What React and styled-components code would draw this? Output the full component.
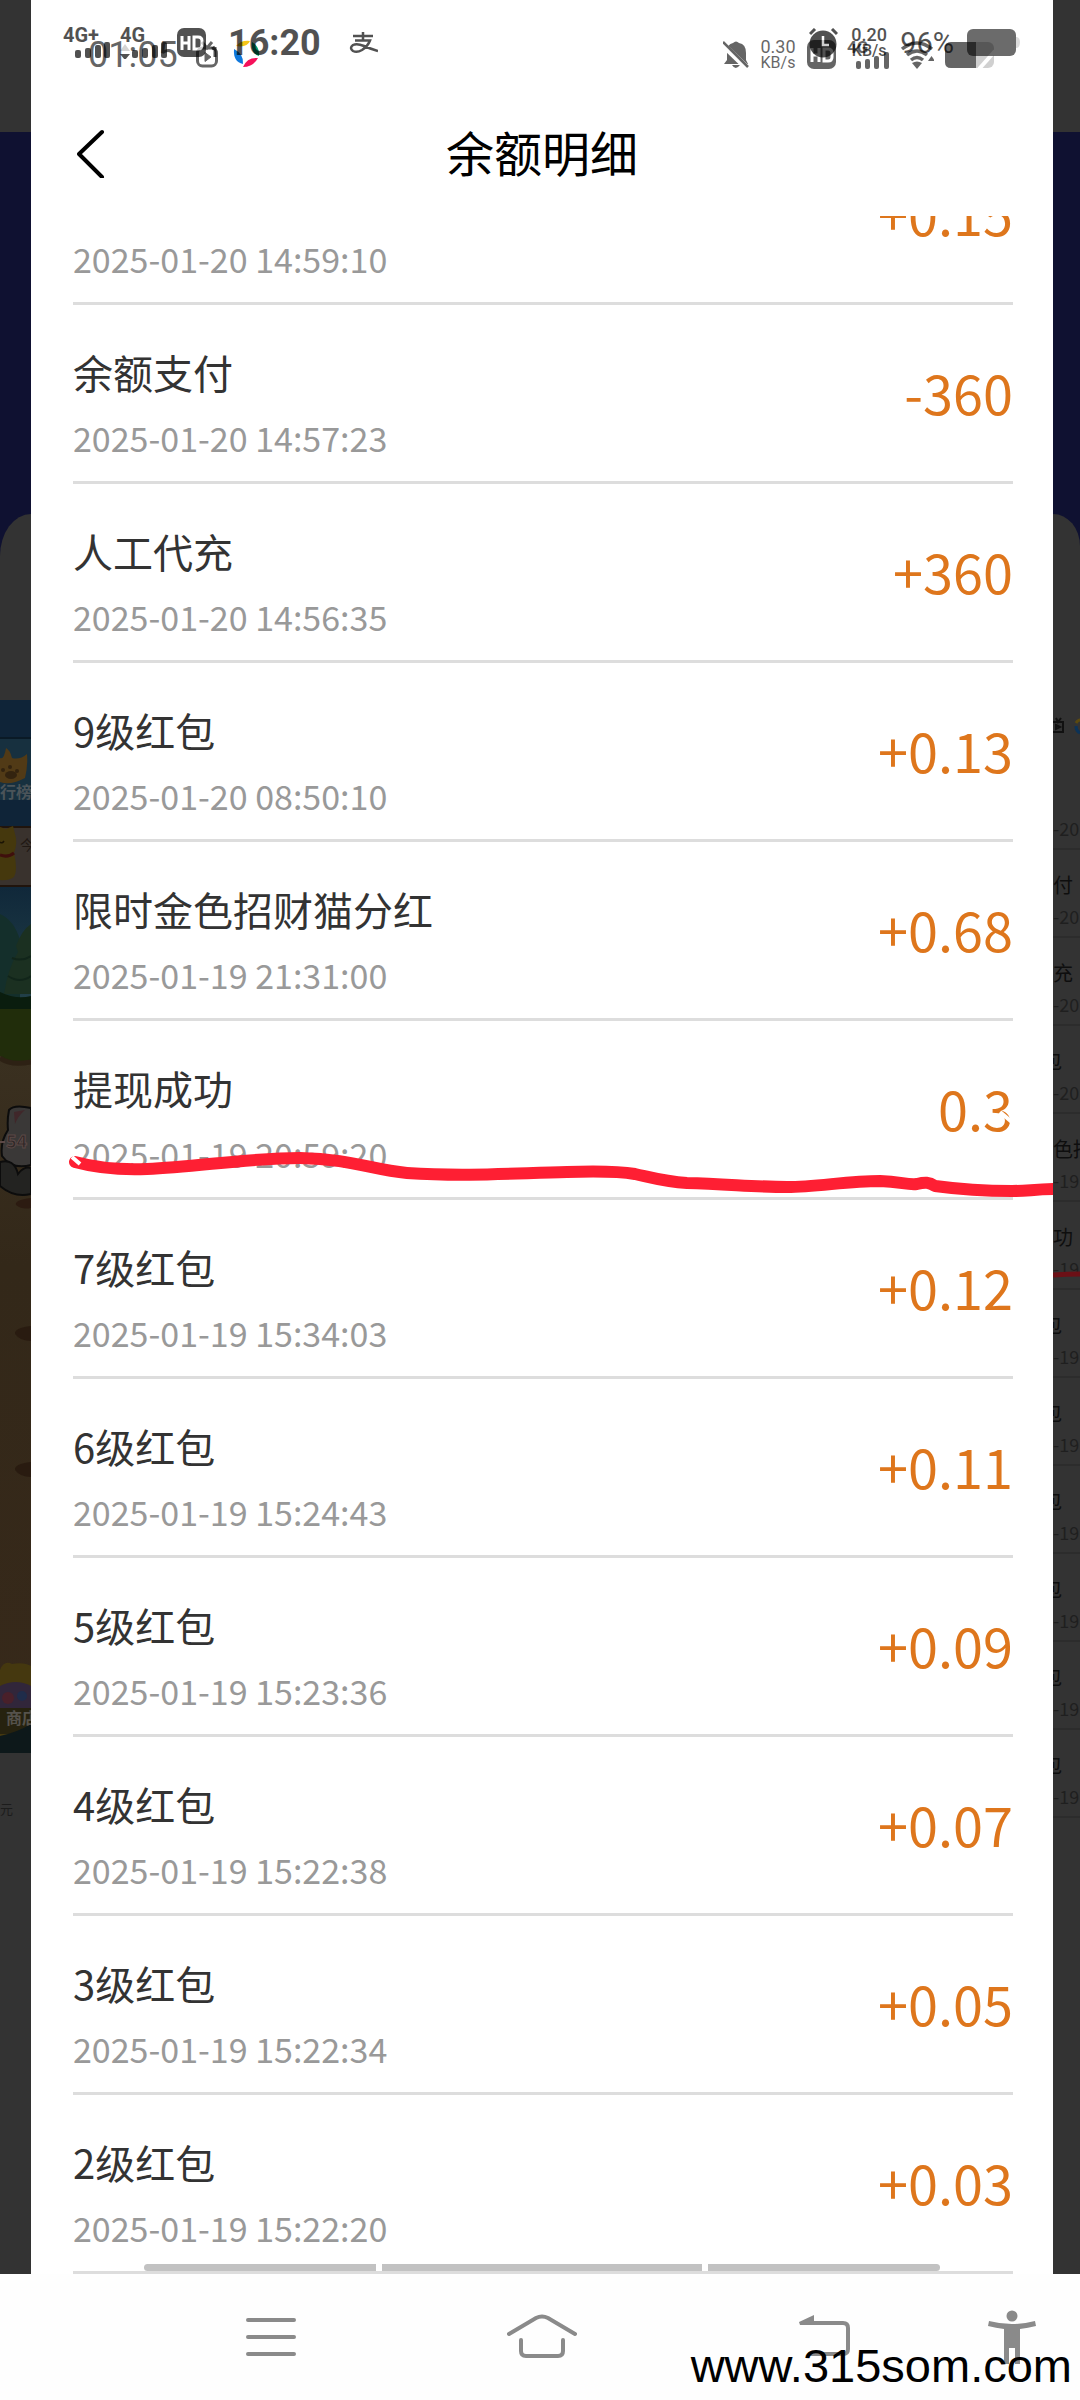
import styled, { createGlobalStyle } from 'styled-components';

const GlobalStyle = createGlobalStyle`
    * {
        box-sizing: border-box;
    }
    body {
        margin: 0;
        background-color: #ffffff;
        font-family: "Noto Sans CJK SC", "Noto Sans", sans-serif;
    }
`;

const Screen = styled.div`
    position: relative;
    width: 100%;
`;
const Backdrop = styled.div`
    display: grid;
    grid-template-columns: 31px minmax(0, 1fr) 27px;
    background-color: #333333;
`;
const Strip = styled.div`
    display: flex;
    flex-direction: column;
    overflow: hidden;
`;
const StripTop = styled.div`
    height: 132px;
`;
const StripBanner = styled.div`
    height: 568px;
    padding-top: 382px;
    background-color: #0f1131;
`;
const StripCard = styled.div`
    height: 186px;
    background-color: #333333;
    border-radius: ${props=>props.side === "left" ? "31px 0 0 0 / 42px 0 0 0" : "0 27px 0 0 / 0 32px 0 0"};
`;
const StripNote = styled.span`
    margin-top: 46px;
    font-size: 13px;
    line-height: 20px;
    color: #1c1c1c;
    white-space: nowrap;
`;
const MiniHead = styled.div`
    height: 62px;
    padding-top: 16px;
    white-space: nowrap;
`;
const MiniRow = styled.div`
    height: 88px;
    padding-top: 20px;
    border-bottom: 2px solid #2c2c2c;
    position: relative;
    white-space: nowrap;
`;
const MiniTitle = styled.div`
    height: 32px;
    font-size: 20px;
    line-height: 30px;
    color: #0e0e0e;
    display: flex;
    margin-left: ${props=>props.$cut ? "-11px" : "0"};
`;
const MiniDate = styled.div`
    font-size: 18px;
    line-height: 28px;
    color: #1f1f1f;
`;
const MiniMark = styled.svg`
    position: absolute;
    left: 0;
    bottom: 6px;
`;

const Sheet = styled.main`
    position: relative;
    min-width: 0;
    background-color: #ffffff;
    overflow: hidden;
`;
const StatusArea = styled.div`
    position: relative;
    height: 88px;
`;
const StatusBar = styled.div`
    position: absolute;
    top: 0;
    left: 0;
    right: 0;
    display: flex;
    align-items: center;
    font-family: Roboto, sans-serif;
    height: ${props=>props.$under ? "109px" : "86px"};
    padding: ${props=>props.$under ? "0 58px 0 57px" : "0 33px 0 32px"};
    opacity: ${props=>props.$under ? "0.6" : "0.68"};
`;
const StatusGroup = styled.div`
    display: flex;
    align-items: center;
    gap: ${props=>props.gap};
    margin-left: ${props=>props.$end ? "auto" : "0"};
`;
const Clock = styled.span`
    font-size: 36px;
    line-height: 40px;
    font-weight: ${props=>props.$under ? "400" : "700"};
    margin: ${props=>props.$under ? "0" : "0 19px 0 2px"};
`;
const Percent = styled.span`
    font-size: 29px;
    line-height: 32px;
    font-weight: 400;
    align-self: flex-start;
`;
const Speed = styled.div`
    width: 36px;
    display: flex;
    flex-direction: column;
    align-items: center;
    font-size: 18px;
    line-height: 16px;
    font-weight: ${props=>props.$bold ? "500" : "400"};
    white-space: nowrap;

    small {
        font-size: 16px;
    }
`;

const Header = styled.header`
    height: 128px;
    display: grid;
    grid-template-columns: 1fr auto 1fr;
    align-items: center;
    padding-bottom: 2px;
`;
const BackButton = styled.button`
    justify-self: start;
    display: flex;
    margin-left: 46px;
    padding: 0;
    border: none;
    background: none;
    cursor: pointer;
`;
const Title = styled.h1`
    margin: 0;
    font-size: 48px;
    line-height: 64px;
    font-weight: 400;
    color: #000000;
`;

const Viewport = styled.div`
    overflow: hidden;
`;
const List = styled.ul`
    list-style: none;
    margin: -90px 0 0;
    padding: 0 40px 0 42px;
`;
const Row = styled.li`
    position: relative;
    display: flex;
    align-items: center;
    justify-content: space-between;
    height: 179px;
    border-bottom: 3px solid #dddddd;
`;
const Info = styled.div`
    display: flex;
    flex-direction: column;
    gap: 12px;
    padding: 38px 0 18px;
`;
const Name = styled.span`
    height: 58px;
    font-size: 40px;
    line-height: 58px;
    color: #333333;
`;
const Time = styled.time`
    font-size: 34px;
    line-height: 50px;
    color: #999999;
`;
const Amount = styled.span`
    padding-bottom: 2px;
    font-size: 54px;
    line-height: 80px;
    color: #de761c;
`;
const Stroke = styled.svg`
    position: absolute;
    left: -6px;
    top: 84px;
    width: calc(100% + 46px);
    height: 100px;
    z-index: 1;
`;

const ScrollMarks = styled.div`
    position: absolute;
    left: 0;
    right: 0;
    bottom: 3px;
    display: flex;
    gap: 6px;
    padding: 0 113px;
`;
const ScrollMark = styled.span`
    flex: ${props=>props.grow};
    height: 7px;
    background-color: #c2c2c2;
    border-radius: ${props=>props.radius || "0"};
`;

const NavBar = styled.nav`
    display: grid;
    grid-template-columns: 271fr 271fr 296fr 77fr;
    height: 126px;
    padding: 0 30px 0 135px;
    background-color: #fefefe;
`;
const NavButton = styled.button`
    display: flex;
    justify-content: center;
    padding: 34px 0 0;
    border: none;
    background: none;
    cursor: pointer;
`;
const SiteMark = styled.span`
    position: absolute;
    right: 8px;
    bottom: 11px;
    font-family: "Liberation Sans", Arial, sans-serif;
    font-size: 47px;
    line-height: 46px;
    color: #000000;
`;

const records = [
    { time: "2025-01-20 14:59:10", amount: "+0.15" },
    { name: "余额支付", time: "2025-01-20 14:57:23", amount: "-360" },
    { name: "人工代充", time: "2025-01-20 14:56:35", amount: "+360" },
    { name: "9级红包", time: "2025-01-20 08:50:10", amount: "+0.13" },
    { name: "限时金色招财猫分红", time: "2025-01-19 21:31:00", amount: "+0.68" },
    { name: "提现成功", time: "2025-01-19 20:59:20", amount: "0.3", marked: true },
    { name: "7级红包", time: "2025-01-19 15:34:03", amount: "+0.12" },
    { name: "6级红包", time: "2025-01-19 15:24:43", amount: "+0.11" },
    { name: "5级红包", time: "2025-01-19 15:23:36", amount: "+0.09" },
    { name: "4级红包", time: "2025-01-19 15:22:38", amount: "+0.07" },
    { name: "3级红包", time: "2025-01-19 15:22:34", amount: "+0.05" },
    { name: "2级红包", time: "2025-01-19 15:22:20", amount: "+0.03" },
];

const miniRows = [
    { name: "付", date: "-20" },
    { name: "充", date: "-20" },
    { name: "包", date: "-20", cut: true },
    { name: "色招", date: "-19" },
    { name: "功", date: "-19", marked: true },
    { name: "包", date: "-19", cut: true },
    { name: "包", date: "-19", cut: true },
    { name: "包", date: "-19", cut: true },
    { name: "包", date: "-19", cut: true },
    { name: "包", date: "-19", cut: true },
    { name: "包", date: "-19", cut: true },
];

const SignalA = ({ label, arrows }) => (
    <svg width="48" height="32" viewBox="0 0 48 32">
        <text x="0" y="15" fontSize="20" fontWeight="700">{label}</text>
        {arrows && <path d="M0 24L5 17L10 24Z" opacity="0.25"/>}
        {arrows && <path d="M0 27H10L5 33Z"/>}
        <rect x="12" y="23" width="6" height="8" rx="2"/>
        <rect x="22" y="21" width="6" height="10" rx="2"/>
        <rect x="32" y="18" width="6" height="13" rx="2"/>
        <rect x="41" y="15" width="6" height="16" rx="2"/>
    </svg>
);

const SignalB = () => (
    <svg width="42" height="29" viewBox="0 0 42 29">
        <text x="0" y="13" fontSize="17" fontWeight="700">4G</text>
        <rect x="9" y="21" width="5" height="8" rx="2"/>
        <rect x="18" y="19" width="5" height="10" rx="2"/>
        <rect x="27" y="16" width="5" height="13" rx="2"/>
        <rect x="37" y="12" width="5" height="17" rx="2"/>
    </svg>
);

const HdIcon = ({ width, children }) => (
    <svg width={width} height="30" viewBox={`0 0 ${width} 30`}>
        <rect width="29" height="29" rx="7"/>
        <g fill="none" stroke="#ffffff" strokeWidth="3">
            <path d="M5 8V22M12 8V22M5 15H12"/>
            <path d="M17 9H21Q25 9 25 13V17Q25 21 21 21H17Z"/>
        </g>
        {children}
    </svg>
);

const StatusUnder = () => (
    <StatusBar $under>
        <StatusGroup gap="18px">
            <Clock $under>01:05</Clock>
            <svg width="22" height="30" viewBox="0 0 22 30" fill="none" stroke="#000000" strokeWidth="3">
                <rect x="1.5" y="8" width="19" height="18" rx="5"/>
                <path d="M6 2L11 8L16 2"/>
                <path d="M9 12.500L15 17L9 21.500Z" fill="#000000" strokeWidth="1"/>
            </svg>
        </StatusGroup>
        <StatusGroup gap="11px" $end>
            <svg width="26" height="28" viewBox="0 0 26 28">
                <path d="M4 11Q4 3 10 2Q13 -1 16 2Q23 3 23 12V19L25 23H1L4 19Z"/>
                <path d="M9 24Q12.500 30 17 24Z"/>
                <path d="M-1 3L24 27" stroke="#ffffff" strokeWidth="6"/>
                <path d="M0 1L25 26" stroke="#000000" strokeWidth="2.500"/>
            </svg>
            <Speed><span>0.30</span><small>KB/s</small></Speed>
            <HdIcon width="29"/>
            <SignalB/>
            <svg width="34" height="28" viewBox="0 0 34 28">
                <g fill="none" stroke="#000000" strokeWidth="3.500">
                    <path d="M2 8Q17 -4 32 8"/>
                    <path d="M7 14Q17 6 27 14"/>
                    <path d="M11 19Q17 14 23 19"/>
                </g>
                <path d="M12 22Q17 19 22 22L17 28Z"/>
                <path d="M28 20L31.500 15L35 20Z"/>
            </svg>
            <svg width="50" height="26" viewBox="0 0 50 26">
                <rect width="49" height="26" rx="6" opacity="0.3"/>
                <path d="M6 0H31V26H6Q0 26 0 20V6Q0 0 6 0Z"/>
                <path d="M34 27L50 9" stroke="#ffffff" strokeWidth="4"/>
            </svg>
        </StatusGroup>
    </StatusBar>
);

const Pinwheel = styled.svg`
    position: absolute;
    left: 202px;
    top: 40px;
`;

const StatusOver = () => (
    <StatusBar>
        <StatusGroup gap="9px">
            <SignalA label="4G+"/>
            <SignalA label="4G" arrows/>
            <HdIcon width="40"><path d="M38 19V29M35 21L38 19" stroke="#000000" strokeWidth="3"/></HdIcon>
            <Clock>16:20</Clock>
            <svg width="29" height="22" viewBox="0 0 29 22" fill="none" stroke="#000000" strokeWidth="2.500">
                <path d="M4 4H24M14 0V8M6 8.500H21Q19 14 13 18Q8 21 4 19Q0 16 4 13Q8 11 15 14Q22 17 29 19"/>
            </svg>
        </StatusGroup>
        <StatusGroup gap="13px" $end>
            <svg width="29" height="30" viewBox="0 0 29 30">
                <circle cx="14" cy="16" r="13.500"/>
                <path d="M1 6L6 1M28 6L23 1" stroke="#000000" strokeWidth="3"/>
                <path d="M14 8V17H20" stroke="#ffffff" strokeWidth="2.500" fill="none"/>
            </svg>
            <Speed $bold><span>0.20</span><small>KB/s</small></Speed>
            <Percent>96%</Percent>
            <svg width="53" height="28" viewBox="0 0 53 28">
                <rect width="49" height="27" rx="6" opacity="0.85"/>
                <path d="M49 8H50Q53 9 53 13Q53 18 50 19H49Z" opacity="0.2"/>
            </svg>
        </StatusGroup>
    </StatusBar>
);

// dimmed game scene that shows past the left edge of the sheet
const Scene = () => (
    <svg width="31" height="1053" viewBox="0 0 31 1053">
        <defs>
            <linearGradient id="sky" x1="0" y1="0" x2="0" y2="1">
                <stop offset="0" stopColor="#10283a"/>
                <stop offset="1" stopColor="#24424a"/>
            </linearGradient>
            <linearGradient id="ground" x1="0" y1="0" x2="0" y2="1">
                <stop offset="0" stopColor="#3a3020"/>
                <stop offset="0.3" stopColor="#332819"/>
                <stop offset="1" stopColor="#37291a"/>
            </linearGradient>
        </defs>
        <rect width="31" height="1053" fill="#0f2438"/>
        <rect y="38" width="31" height="62" fill="#17303f"/>
        <path d="M0 38H31" stroke="#0a1a26" strokeWidth="2"/>
        <path d="M0 58Q4 60 6 48Q10 50 12 58Q20 60 27 54Q28 66 25 78Q10 86 0 82Z" fill="#513a16"/>
        <ellipse cx="11" cy="75" rx="6" ry="4" fill="#33230f"/>
        <circle cx="3" cy="70" r="2" fill="#33230f"/>
        <circle cx="10" cy="67" r="2" fill="#33230f"/>
        <circle cx="17" cy="71" r="2" fill="#33230f"/>
        <text x="0" y="98" fontSize="16" fontWeight="700" fill="#4b5459">行榜</text>
        <rect y="127" width="31" height="58" fill="#39322d"/>
        <path d="M0 127H31M0 186H31" stroke="#20140c" strokeWidth="2"/>
        <text x="20" y="150" fontSize="14" fill="#201813">今</text>
        <path d="M0 127L6 129L13 126L15 134Q18 142 14 153Q18 170 14 177Q8 181 0 180Z" fill="#45380d"/>
        <path d="M0 155Q8 158 14 153" stroke="#3f0f0c" strokeWidth="3" fill="none"/>
        <path d="M0 142Q2 144 4 141" stroke="#1b1404" strokeWidth="1.500" fill="none"/>
        <rect y="187" width="31" height="124" fill="url(#sky)"/>
        <path d="M0 214Q14 220 20 240V311H0Z" fill="#142f2b"/>
        <path d="M31 224Q22 230 16 246L18 252Q8 268 4 294H31Z" fill="#1b3021"/>
        <path d="M31 256Q22 262 12 258M31 276Q20 284 8 276" stroke="#11251a" strokeWidth="2" fill="none"/>
        <path d="M0 292Q16 300 31 296V311H0Z" fill="#0a1d0e"/>
        <rect y="309" width="31" height="56" fill="#212d0b"/>
        <path d="M0 356Q10 364 31 360V1053H0Z" fill="url(#ground)"/>
        <path d="M0 358Q10 366 31 362" stroke="#2d2114" strokeWidth="5" fill="none"/>
        <g stroke="#0c0c0c" strokeWidth="2">
            <path d="M31 408Q14 404 9 410Q7 420 8 430Q0 442 2 456Q12 470 31 465Z" fill="#3a3837"/>
            <path d="M0 462Q14 458 18 474Q24 466 31 468V494Q14 498 0 486Z" fill="#232321"/>
        </g>
        <path d="M14 412L25 410Q18 416 15 424Z" fill="#40272a"/>
        <text x="6" y="448" fontSize="18" fontWeight="700" fill="#2f2726" stroke="#5b4846" strokeWidth="1">54</text>
        <path d="M0 442H5" stroke="#5b4846" strokeWidth="2"/>
        <path d="M31 498Q14 500 16 505Q22 510 31 508Z" fill="#2c1b11"/>
        <path d="M31 626Q14 628 15 634Q20 641 31 641Z" fill="#291b10"/>
        <path d="M31 762Q14 764 15 770Q20 777 31 777Z" fill="#291b10"/>
        <path d="M0 970Q4 960 12 964Q24 962 31 966V1053H0Z" fill="#45380f"/>
        <path d="M0 986Q16 978 31 986V1012H0Z" fill="#31263a"/>
        <circle cx="8" cy="998" r="6" fill="#49202a"/>
        <circle cx="22" cy="996" r="5" fill="#1f2c4a"/>
        <rect y="1008" width="31" height="26" fill="#26220f"/>
        <path d="M0 1036Q18 1032 31 1024V1053H0Z" fill="#0d181a"/>
        <text x="6" y="1024" fontSize="16" fontWeight="700" fill="#55524c">商店</text>
    </svg>
);

const App = () => {
  return (
    <Screen>
        <GlobalStyle/>
        <Backdrop>
            <Strip>
                <StripTop/>
                <StripBanner><StripCard side="left"/></StripBanner>
                <Scene/>
                <StripNote>元</StripNote>
            </Strip>
            <Sheet>
                <StatusArea>
                    <Pinwheel width="27" height="27" viewBox="0 0 27 27">
                        <path d="M3 6Q8 0 17 1Q14 8 3 6Z" fill="#f5c518"/>
                        <path d="M19 2Q27 7 26 16Q18 14 19 2Z" fill="#00a06e"/>
                        <path d="M25 18Q20 27 10 27Q14 17 25 18Z" fill="#f5115a"/>
                        <path d="M1 9Q11 14 10 24Q0 22 1 9Z" fill="#0f78dc"/>
                    </Pinwheel>
                    <StatusUnder/>
                    <StatusOver/>
                </StatusArea>
                <Header>
                    <BackButton aria-label="返回">
                        <svg width="28" height="54" viewBox="0 0 28 54" fill="none" stroke="#000000" strokeWidth="4" strokeLinecap="round" strokeLinejoin="round">
                            <path d="M25 8L2 30L25 53"/>
                        </svg>
                    </BackButton>
                    <Title>余额明细</Title>
                </Header>
                <Viewport>
                    <List>
                        {records.map(item => (
                            <Row key={item.time}>
                                <Info>
                                    <Name>{item.name}</Name>
                                    <Time>{item.time}</Time>
                                </Info>
                                <Amount>{item.amount}</Amount>
                                {item.marked &&
                                    <Stroke viewBox="0 0 986 100" preserveAspectRatio="none" fill="none">
                                        <path d="M8 57C30 63 55 65 80 64C130 62 180 53 233 53C285 54 305 65 340 68C400 72 450 68 500 67C530 66 550 66 568 69C590 74 600 77 620 78C660 79 690 82 720 82C750 82 780 76 813 76C835 77 840 80 850 79C858 77 862 77 868 81C890 84 915 86 945 86C960 86 970 84 992 84" stroke="#fe1f33" strokeWidth="12" strokeLinecap="round" strokeLinejoin="round"/>
                                        <path d="M5 52L13 59" stroke="#ffffff" strokeWidth="4"/>
                                        <path d="M933 7L946 18" stroke="#ffffff" strokeWidth="4"/>
                                    </Stroke>
                                }
                            </Row>
                        ))}
                    </List>
                </Viewport>
                <ScrollMarks>
                    <ScrollMark grow={232} radius="4px 0 0 4px"/>
                    <ScrollMark grow={320}/>
                    <ScrollMark grow={232} radius="0 4px 4px 0"/>
                </ScrollMarks>
            </Sheet>
            <Strip>
                <StripTop/>
                <StripBanner><StripCard side="right"/></StripBanner>
                <MiniHead>
                    <svg width="27" height="24" viewBox="0 0 27 24" fill="none" stroke="#111111" strokeWidth="2">
                        <path d="M0 6H10V16H0M3 2L5 6L8 2M3 9L7 11L3 13Z"/>
                        <path d="M23 7Q25 4 27 4" stroke="#5c4a10" strokeWidth="3"/>
                        <path d="M23 10Q23 15 27 17" stroke="#0c3358" strokeWidth="3"/>
                    </svg>
                </MiniHead>
                <MiniRow>
                    <MiniTitle/>
                    <MiniDate>-20</MiniDate>
                </MiniRow>
                {miniRows.map((item, i) => (
                    <MiniRow key={i}>
                        <MiniTitle $cut={item.cut}>{item.name}</MiniTitle>
                        <MiniDate>{item.date}</MiniDate>
                        {item.marked &&
                            <MiniMark width="27" height="12" viewBox="0 0 27 12" fill="none">
                                <path d="M0 5Q14 4 27 4" stroke="#6b1016" strokeWidth="5"/>
                            </MiniMark>
                        }
                    </MiniRow>
                ))}
            </Strip>
        </Backdrop>
        <NavBar>
            <NavButton aria-label="菜单">
                <svg width="50" height="56" viewBox="0 0 50 56" stroke="#8a8a8a" strokeWidth="4" strokeLinecap="round">
                    <path d="M2 12H48M2 29H48M2 46H48"/>
                </svg>
            </NavButton>
            <NavButton aria-label="主页">
                <svg width="70" height="56" viewBox="0 0 70 56" fill="none" stroke="#8a8a8a" strokeWidth="4" strokeLinecap="round">
                    <path d="M2 26L29 10Q35 7 41 10L68 26"/>
                    <path d="M14 32V43Q14 48 19 48H51Q56 48 56 43V32"/>
                </svg>
            </NavButton>
            <NavButton aria-label="返回上一页">
                <svg width="52" height="56" viewBox="0 0 52 56" fill="none" stroke="#8a8a8a" strokeWidth="4" strokeLinecap="round">
                    <path d="M12 15H44Q49 15 49 20V41Q49 46 44 46H12"/>
                    <path d="M0 14L15 7V17H1Z" fill="#8a8a8a" stroke="none"/>
                </svg>
            </NavButton>
            <NavButton aria-label="无障碍">
                <svg width="48" height="56" viewBox="0 0 48 56" fill="#8a8a8a">
                    <circle cx="24" cy="8" r="5.500"/>
                    <path d="M1 13Q24 19 47 13L48 18Q40 20 32 21V56H27V40H21V56H16V21Q8 20 0 18Z"/>
                </svg>
            </NavButton>
        </NavBar>
        <SiteMark>www.315som.com</SiteMark>
    </Screen>
  )
}

export default App
